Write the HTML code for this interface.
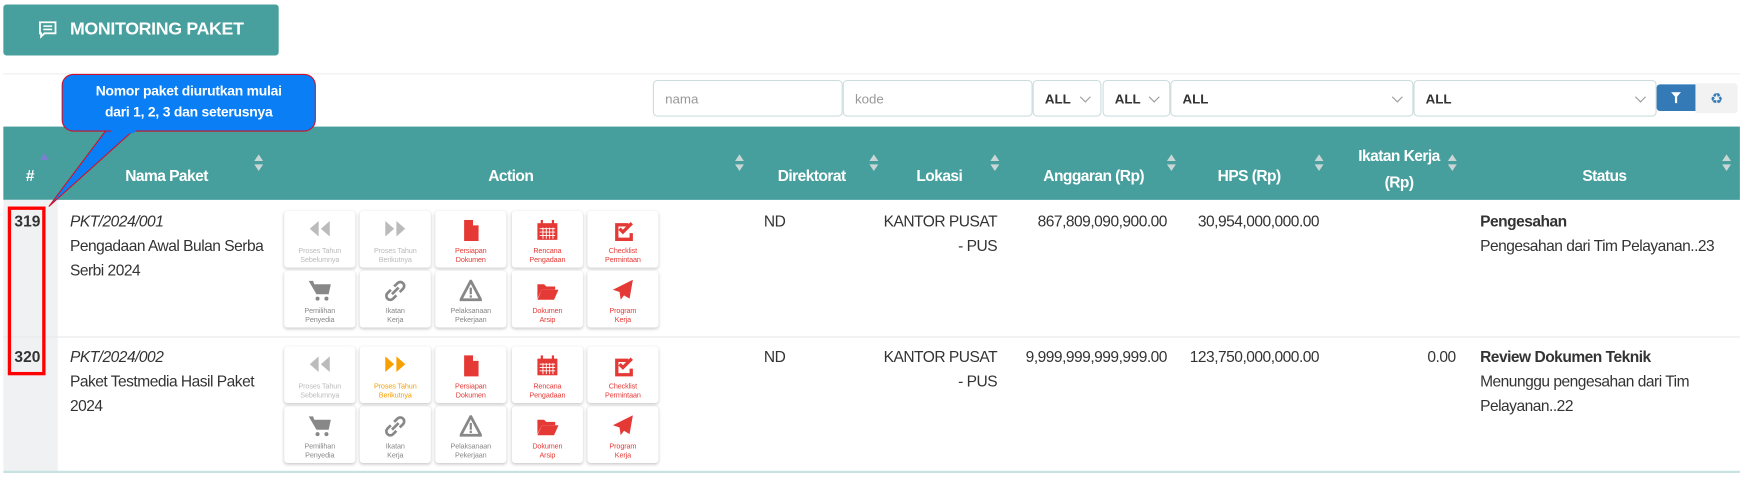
<!DOCTYPE html>
<html><head><meta charset="utf-8"><style>
*{margin:0;padding:0;box-sizing:border-box}
body{width:1741px;height:477px;background:#fff;position:relative;overflow:hidden;color:#333}
#w{position:absolute;left:0;top:0;width:1568px;height:430px;transform:scale(1.11033);transform-origin:0 0;font-family:"Liberation Sans",Arial,sans-serif}
.a{position:absolute}
.btn{position:absolute;width:64px;height:51px;background:#fff;border-radius:3px;box-shadow:0 1px 3px rgba(0,0,0,.22);text-align:center}
.btn svg{position:absolute;left:22px;top:8px}
.btn .l{position:absolute;left:0;right:0;top:33px;font-size:6.5px;line-height:7.5px;letter-spacing:-0.1px}
.g{color:#bbb}.r{color:#e53935}.o{color:#f7a000}.d{color:#888}
.hd{position:absolute;color:#fff;font-weight:bold;font-size:14px;text-align:center;letter-spacing:-0.5px}
.sa{position:absolute;width:8px;height:16px}
.inp{position:absolute;top:72px;height:33px;border:1px solid #cdd;border-radius:4px;background:#fff;font-size:12px;padding:9px 10px}
.sel{font-weight:bold;color:#333}
.sel:after{content:"";position:absolute;right:10px;top:11px;width:6px;height:6px;border-right:1px solid #999;border-bottom:1px solid #999;transform:rotate(45deg)}
.txt{font-size:14px;line-height:22px;color:#333;letter-spacing:-0.45px}
</style></head><body><div id="w">
<div class="a" style="left:3px;top:4px;width:248px;height:46px;background:#48a09e;border-radius:3px;color:#fff;font-weight:bold;font-size:16px;line-height:46px;padding-left:60px;letter-spacing:-0.3px">MONITORING PAKET</div>
<svg class="a" style="left:35px;top:19px" width="16" height="16" viewBox="0 0 16 16"><path d="M1 1h14v10H5l-3 3v-3H1z" fill="none" stroke="#fff" stroke-width="1.6"/><path d="M4 4.5h8M4 7.5h8" stroke="#fff" stroke-width="1.4"/></svg>
<div class="a" style="left:3px;top:66px;width:1564px;height:1px;background:#eee"></div>

<div class="inp" style="left:588px;width:171px;color:#999">nama</div>
<div class="inp" style="left:759px;width:171px;color:#999">kode</div>
<div class="inp sel" style="left:930px;width:62px">ALL</div>
<div class="inp sel" style="left:993px;width:61px">ALL</div>
<div class="inp sel" style="left:1054px;width:219px">ALL</div>
<div class="inp sel" style="left:1273px;width:219px">ALL</div>
<div class="a" style="left:1492px;top:76px;width:35px;height:24px;background:#337ab7;border-radius:3px 0 0 3px"></div>
<svg class="a" style="left:1505px;top:83px" width="9" height="10" viewBox="0 0 9 10"><path d="M0 0h9L5.5 4v6h-2V4z" fill="#fff"/></svg>
<div class="a" style="left:1527px;top:75px;width:38px;height:27px;background:#f2f2f2;border-radius:0 3px 3px 0;color:#337ab7;font-size:13px;text-align:center;line-height:27px">♻</div>

<div class="a" style="left:3px;top:114px;width:1564px;height:66px;background:#479f9d"></div>
<div class="hd" style="left:17px;top:150px;width:20px">#</div>
<div class="a" style="left:36px;top:138px;width:0;height:0;border-left:4px solid transparent;border-right:4px solid transparent;border-bottom:6px solid #7b7fd0"></div>
<div class="hd" style="left:90px;top:150px;width:120px">Nama Paket</div>
<div class="hd" style="left:400px;top:150px;width:120px">Action</div>
<div class="hd" style="left:680px;top:150px;width:102px">Direktorat</div>
<div class="hd" style="left:800px;top:150px;width:92px">Lokasi</div>
<div class="hd" style="left:925px;top:150px;width:120px">Anggaran (Rp)</div>
<div class="hd" style="left:1070px;top:150px;width:110px">HPS (Rp)</div>
<div class="hd" style="left:1200px;top:128px;width:120px;line-height:24px">Ikatan Kerja<br>(Rp)</div>
<div class="hd" style="left:1390px;top:150px;width:110px">Status</div>
<svg width="0" height="0" style="position:absolute"><defs><g id="sa"><path d="M0 6L4 0L8 6z M0 9L4 15L8 9z" fill="#c9d6d6"/></g></defs></svg>
<svg class="sa" style="left:229px;top:139px"><use href="#sa"/></svg>
<svg class="sa" style="left:662px;top:139px"><use href="#sa"/></svg>
<svg class="sa" style="left:783px;top:139px"><use href="#sa"/></svg>
<svg class="sa" style="left:892px;top:139px"><use href="#sa"/></svg>
<svg class="sa" style="left:1051px;top:139px"><use href="#sa"/></svg>
<svg class="sa" style="left:1184px;top:139px"><use href="#sa"/></svg>
<svg class="sa" style="left:1304px;top:139px"><use href="#sa"/></svg>
<svg class="sa" style="left:1551px;top:139px"><use href="#sa"/></svg>

<div class="a" style="left:3px;top:180px;width:49px;height:245px;background:#f0f1f3"></div>
<div class="a" style="left:3px;top:303px;width:1564px;height:1px;background:#e6e8ea"></div>
<div class="a" style="left:3px;top:424px;width:1564px;height:2px;background:#c6e2e1"></div>

<div class="a" style="left:13px;top:191px;font-weight:bold;font-size:14px">319</div>
<div class="a" style="left:13px;top:313px;font-weight:bold;font-size:14px">320</div>
<div class="a" style="left:7px;top:186px;width:34px;height:152px;border:3px solid #f00"></div>

<div class="a txt" style="left:63px;top:188px;width:188px"><i>PKT/2024/001</i><br>Pengadaan Awal Bulan Serba Serbi 2024</div>
<div class="a txt" style="left:63px;top:310px;width:188px"><i>PKT/2024/002</i><br>Paket Testmedia Hasil Paket 2024</div>
<div class="a txt" style="left:688px;top:188px">ND</div>
<div class="a txt" style="left:688px;top:310px">ND</div>
<div class="a txt" style="left:790px;top:188px;width:108px;text-align:right">KANTOR PUSAT<br>- PUS</div>
<div class="a txt" style="left:790px;top:310px;width:108px;text-align:right">KANTOR PUSAT<br>- PUS</div>
<div class="a txt" style="left:900px;top:188px;width:151px;text-align:right">867,809,090,900.00</div>
<div class="a txt" style="left:900px;top:310px;width:151px;text-align:right">9,999,999,999,999.00</div>
<div class="a txt" style="left:1040px;top:188px;width:148px;text-align:right">30,954,000,000.00</div>
<div class="a txt" style="left:1040px;top:310px;width:148px;text-align:right">123,750,000,000.00</div>
<div class="a txt" style="left:1200px;top:310px;width:111px;text-align:right">0.00</div>
<div class="a txt" style="left:1333px;top:188px;width:230px"><b>Pengesahan</b><br>Pengesahan dari Tim Pelayanan..23</div>
<div class="a txt" style="left:1333px;top:310px;width:190px"><b>Review Dokumen Teknik</b><br>Menunggu pengesahan dari Tim Pelayanan..22</div>

<svg width="0" height="0" style="position:absolute"><defs>
<g id="rw"><path d="M9 1L1 8l8 7zM19 1l-8 7 8 7z"/></g>
<g id="ff"><path d="M1 1l8 7-8 7zM11 1l8 7-8 7z"/></g>
<g id="fi"><path d="M4 0h8l5 5v14H4z"/><path d="M12 0v5h5" fill="#fff"/></g>
<g id="ca"><rect x="1" y="3" width="18" height="15"/><rect x="4" y="0" width="2" height="5"/><rect x="14" y="0" width="2" height="5"/><path d="M3 8h14M3 11h14M3 14h14M6 7v10M9 7v10M12 7v10M15 7v10" stroke="#fff" stroke-width=".8"/></g>
<g id="ck"><path d="M4 3h11v3H6v10h10v-4h3v7H3V3z"/><path d="M7 8l3 3 8-8" fill="none" stroke-width="3" stroke="currentColor"/></g>
<g id="ct"><path d="M0 1h4l1 3h15l-2 9H7z"/><circle cx="8" cy="17" r="1.8"/><circle cx="16" cy="17" r="1.8"/></g>
<g id="lk"><path d="M9 6l3-3a3.5 3.5 0 015 5l-3 3M11 14l-3 3a3.5 3.5 0 01-5-5l3-3M7 13l6-6" fill="none" stroke="currentColor" stroke-width="2.4"/></g>
<g id="wn"><path d="M10 1L19 18H1z" fill="none" stroke="currentColor" stroke-width="2.5"/><path d="M9 7h2v6H9zM9 14h2v2H9z"/></g>
<g id="fo"><path d="M1 4h6l2 2h8v3H5L1 17z"/><path d="M5 9h15l-4 9H1z"/></g>
<g id="pl"><path d="M19 0L1 9l6 2 1 7 3-4 5 3z"/></g>
</defs></svg>

<div class="btn" style="left:256px;top:190px"><svg width="20" height="20" class="g" fill="currentColor"><use href="#rw"/></svg><div class="l g">Proses Tahun<br>Sebelumnya</div></div>
<div class="btn" style="left:324px;top:190px"><svg width="20" height="20" class="g" fill="currentColor"><use href="#ff"/></svg><div class="l g">Proses Tahun<br>Berikutnya</div></div>
<div class="btn" style="left:392px;top:190px"><svg width="20" height="20" class="r" fill="currentColor"><use href="#fi"/></svg><div class="l r">Persiapan<br>Dokumen</div></div>
<div class="btn" style="left:461px;top:190px"><svg width="20" height="20" class="r" fill="currentColor"><use href="#ca"/></svg><div class="l r">Rencana<br>Pengadaan</div></div>
<div class="btn" style="left:529px;top:190px"><svg width="20" height="20" class="r" fill="currentColor"><use href="#ck"/></svg><div class="l r">Checklist<br>Permintaan</div></div>
<div class="btn" style="left:256px;top:244px"><svg width="20" height="20" class="d" fill="currentColor"><use href="#ct"/></svg><div class="l d">Pemilihan<br>Penyedia</div></div>
<div class="btn" style="left:324px;top:244px"><svg width="20" height="20" class="d" fill="currentColor"><use href="#lk"/></svg><div class="l d">Ikatan<br>Kerja</div></div>
<div class="btn" style="left:392px;top:244px"><svg width="20" height="20" class="d" fill="currentColor"><use href="#wn"/></svg><div class="l d">Pelaksanaan<br>Pekerjaan</div></div>
<div class="btn" style="left:461px;top:244px"><svg width="20" height="20" class="r" fill="currentColor"><use href="#fo"/></svg><div class="l r">Dokumen<br>Arsip</div></div>
<div class="btn" style="left:529px;top:244px"><svg width="20" height="20" class="r" fill="currentColor"><use href="#pl"/></svg><div class="l r">Program<br>Kerja</div></div>
<div class="btn" style="left:256px;top:312px"><svg width="20" height="20" class="g" fill="currentColor"><use href="#rw"/></svg><div class="l g">Proses Tahun<br>Sebelumnya</div></div>
<div class="btn" style="left:324px;top:312px"><svg width="20" height="20" class="o" fill="currentColor"><use href="#ff"/></svg><div class="l o">Proses Tahun<br>Berikutnya</div></div>
<div class="btn" style="left:392px;top:312px"><svg width="20" height="20" class="r" fill="currentColor"><use href="#fi"/></svg><div class="l r">Persiapan<br>Dokumen</div></div>
<div class="btn" style="left:461px;top:312px"><svg width="20" height="20" class="r" fill="currentColor"><use href="#ca"/></svg><div class="l r">Rencana<br>Pengadaan</div></div>
<div class="btn" style="left:529px;top:312px"><svg width="20" height="20" class="r" fill="currentColor"><use href="#ck"/></svg><div class="l r">Checklist<br>Permintaan</div></div>
<div class="btn" style="left:256px;top:366px"><svg width="20" height="20" class="d" fill="currentColor"><use href="#ct"/></svg><div class="l d">Pemilihan<br>Penyedia</div></div>
<div class="btn" style="left:324px;top:366px"><svg width="20" height="20" class="d" fill="currentColor"><use href="#lk"/></svg><div class="l d">Ikatan<br>Kerja</div></div>
<div class="btn" style="left:392px;top:366px"><svg width="20" height="20" class="d" fill="currentColor"><use href="#wn"/></svg><div class="l d">Pelaksanaan<br>Pekerjaan</div></div>
<div class="btn" style="left:461px;top:366px"><svg width="20" height="20" class="r" fill="currentColor"><use href="#fo"/></svg><div class="l r">Dokumen<br>Arsip</div></div>
<div class="btn" style="left:529px;top:366px"><svg width="20" height="20" class="r" fill="currentColor"><use href="#pl"/></svg><div class="l r">Program<br>Kerja</div></div>

<svg class="a" style="left:40px;top:66px" width="250" height="125">
<path d="M58 48 L84 48 L4 120 Z" fill="#0a7ff5" stroke="#d0102a" stroke-width="1"/>
<rect x="16" y="1" width="228" height="51" rx="10" fill="#0a7ff5" stroke="#d0102a" stroke-width="1"/>
<path d="M59 50 L84 50 L80 54 L61 54Z" fill="#0a7ff5"/>
</svg>
<div class="a" style="left:56px;top:73px;width:228px;text-align:center;color:#fff;font-weight:bold;font-size:12.5px;line-height:19px;letter-spacing:-0.2px">Nomor paket diurutkan mulai<br>dari 1, 2, 3 dan seterusnya</div>
</div></body></html>
